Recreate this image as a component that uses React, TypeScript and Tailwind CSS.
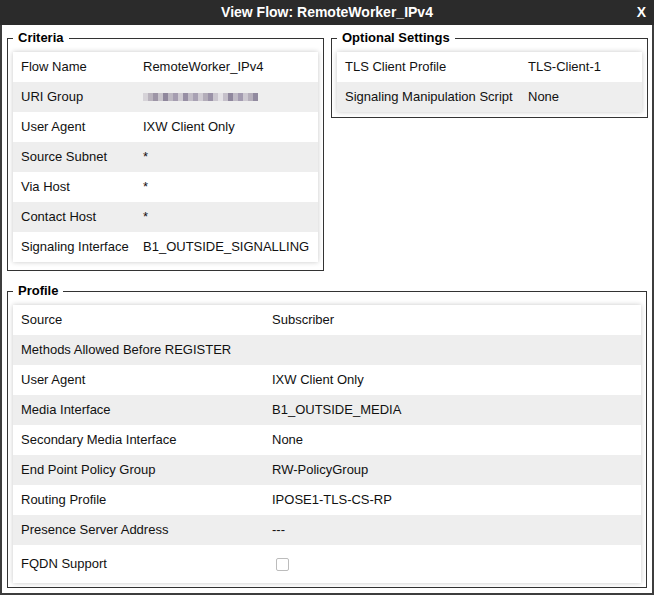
import React from "react";

type Row = { label: string; value?: React.ReactNode };

const criteria: Row[] = [
  { label: "Flow Name", value: "RemoteWorker_IPv4" },
  { label: "URI Group", value: <Blurred /> },
  { label: "User Agent", value: "IXW Client Only" },
  { label: "Source Subnet", value: "*" },
  { label: "Via Host", value: "*" },
  { label: "Contact Host", value: "*" },
  { label: "Signaling Interface", value: "B1_OUTSIDE_SIGNALLING" },
];

const optional: Row[] = [
  { label: "TLS Client Profile", value: "TLS-Client-1" },
  { label: "Signaling Manipulation Script", value: "None" },
];

const profile: Row[] = [
  { label: "Source", value: "Subscriber" },
  { label: "Methods Allowed Before REGISTER", value: "" },
  { label: "User Agent", value: "IXW Client Only" },
  { label: "Media Interface", value: "B1_OUTSIDE_MEDIA" },
  { label: "Secondary Media Interface", value: "None" },
  { label: "End Point Policy Group", value: "RW-PolicyGroup" },
  { label: "Routing Profile", value: "IPOSE1-TLS-CS-RP" },
  { label: "Presence Server Address", value: "---" },
];

// blurred-out value (hidden in the screenshot)
function Blurred() {
  const blocks = [
    "#d6d3d8", "#b9b3bd", "#9d95a6", "#c8c4cb", "#8f879c", "#bdb8c2", "#a59db0",
    "#cfcbd2", "#978fa4", "#c2bdc7", "#a8a1b3", "#d0ccd3", "#b3adb9", "#9a92a7",
    "#cbc7cf", "#e4e2e6", "#c5c0ca", "#8f879d", "#bfbac5", "#a39bb0", "#cdc9d1",
    "#b5afbb", "#918a9f",
  ];
  return (
    <div className="flex h-[8px] blur-[0.6px]">
      {blocks.map((c, i) => (
        <div key={i} className="w-[5px] h-full" style={{ background: c }} />
      ))}
    </div>
  );
}

function Table({ rows, labelWidth, children }: { rows: Row[]; labelWidth: string; children?: React.ReactNode }) {
  return (
    <div className="bg-white shadow-[0_0_5px_rgba(0,0,0,0.22)]">
      {rows.map((r, i) => (
        <div key={r.label} className={`flex items-center h-[30px] ${i % 2 === 1 ? "bg-[#eeeeee]" : "bg-white"}`}>
          <div className={`${labelWidth} pl-[8px] shrink-0 whitespace-nowrap`}>{r.label}</div>
          <div className="whitespace-nowrap">{r.value}</div>
        </div>
      ))}
      {children}
    </div>
  );
}

function Section({ title, className, children }: { title: string; className?: string; children: React.ReactNode }) {
  return (
    <fieldset className={`border border-[#333333] pl-[5px] pr-[5px] pt-[6px] ${className ?? ""}`}>
      <legend className="px-[5px] text-[13px] leading-[16px] font-bold text-black">{title}</legend>
      {children}
    </fieldset>
  );
}

export default function App() {
  return (
    <div
      className="w-[654px] h-[595px] bg-[#3d3d3d] flex flex-col text-[13px] text-[#111111]"
      style={{ fontFamily: '"Liberation Sans", Arial, sans-serif' }}
    >
      <div className="h-[25px] shrink-0 bg-[#2b2b2b] flex items-center justify-center relative text-white font-bold text-[14px]">
        View Flow: RemoteWorker_IPv4
        <span className="absolute right-[8px] top-[2px]">X</span>
      </div>
      <div className="mx-[2px] mb-[2px] flex-1 bg-white pl-[5px] pt-[5px]">
        <div className="flex items-start gap-[7px]">
          <Section title="Criteria" className="w-[317px] pb-[8px]">
            <Table rows={criteria} labelWidth="w-[130px]" />
          </Section>
          <Section title="Optional Settings" className="w-[317px] pb-[5px]">
            <Table rows={optional} labelWidth="w-[191px]" />
          </Section>
        </div>
        <Section title="Profile" className="w-[640px] mt-[12px] pb-[4px]">
          <Table rows={profile} labelWidth="w-[259px]">
            <div className="flex items-center h-[38px] bg-white">
              <div className="w-[259px] pl-[8px] shrink-0">FQDN Support</div>
              <div className="ml-[4px] w-[13px] h-[13px] border border-[#bcbcbc] rounded-[2px] bg-white" />
            </div>
          </Table>
        </Section>
      </div>
    </div>
  );
}
